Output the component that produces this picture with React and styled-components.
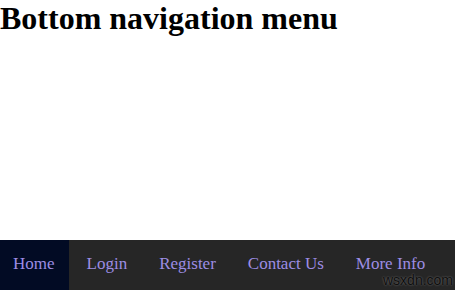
import React from "react";
import styled, { createGlobalStyle } from "styled-components";

const GlobalStyle = createGlobalStyle`
  html, body {
    margin: 0;
    padding: 0;
    background: #ffffff;
    font-family: "Liberation Serif", "Times New Roman", serif;
  }
`;

const links = ["Home", "Login", "Register", "Contact Us", "More Info"];

export default function App() {
  return (
    <Page>
      <GlobalStyle />
      <Title>Bottom navigation menu</Title>
      <NavBar>
        {links.map((name, i) => (
          <NavLink key={name} href="#" $active={i === 0}>
            {name}
          </NavLink>
        ))}
        <Watermark>wsxdn.com</Watermark>
      </NavBar>
    </Page>
  );
}

const Page = styled.div`
  min-height: 290px;
`;

const Title = styled.h1`
  margin: 0;
  font-size: 32px;
  font-weight: 700;
  color: #000000;
  font-family: "Liberation Serif", "Times New Roman", serif;
`;

const NavBar = styled.nav`
  position: fixed;
  left: 0;
  bottom: 0;
  width: 100%;
  height: 50px;
  display: flex;
  align-items: stretch;
  gap: 5px;
  background-color: #262626;
  overflow: hidden;
`;

const NavLink = styled.a`
  display: flex;
  align-items: center;
  padding: 0 14px 2px 13px;
  font-size: 17px;
  color: #9d8de4;
  text-decoration: none;
  background-color: ${(p) => (p.$active ? "#020b24" : "transparent")};
  &:hover {
    background-color: #020b24;
  }
`;

const Watermark = styled.span`
  position: absolute;
  left: 383px;
  top: 32px;
  font-family: "Liberation Sans", Arial, sans-serif;
  font-size: 14px;
  line-height: 16px;
  color: #0e0e0e;
  text-shadow: 0 0 2px #7a7a7a;
`;
